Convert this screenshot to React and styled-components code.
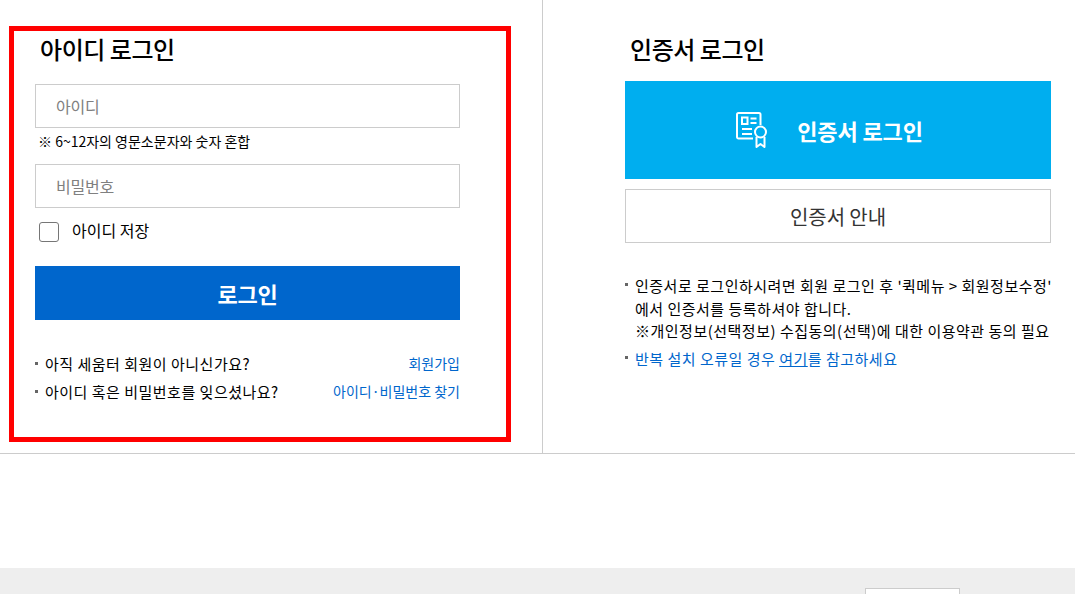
import styled, { createGlobalStyle } from "styled-components"

const Global = createGlobalStyle`
  html, body {
    margin: 0;
    padding: 0;
    background: #fff;
    overflow: hidden;
  }
  body {
    font-family: "Noto Sans CJK KR", "Noto Sans", sans-serif;
    color: #000;
  }
  * {
    box-sizing: border-box;
  }
`

const Page = styled.div`
  width: 1075px;
  height: 594px;
  display: flex;
  flex-direction: column;
  overflow: hidden;
`

const Columns = styled.div`
  display: flex;
  flex: none;
  height: 454px;
  border-bottom: 1px solid #ccc;
`

const LeftColumn = styled.section`
  flex: none;
  width: 543px;
  padding: 26px 0 0 9px;
  border-right: 1px solid #ccc;
`

const RedBox = styled.div`
  width: 502px;
  height: 416px;
  border: 5px solid #f00;
  padding: 0 46px 0 21px;
`

const RightColumn = styled.section`
  flex: 1;
  min-width: 0;
  padding: 31px 24px 0 82px;
`

const Title = styled.h2`
  margin: 0;
  padding-left: ${(p) => p.$indent}px;
  font-size: 24px;
  line-height: 36px;
  font-weight: 500;
  letter-spacing: -0.45px;
`

const Field = styled.input`
  display: block;
  width: 100%;
  height: 44px;
  padding: 0 20px;
  border: 1px solid #ccc;
  border-radius: 0;
  outline: none;
  background: #fff;
  font-family: inherit;
  font-size: 16px;
  letter-spacing: -0.2px;

  &::placeholder {
    color: #808080;
    opacity: 1;
  }
`

const LoginFields = styled.div`
  margin-top: 17px;
`

const Hint = styled.p`
  margin: 0;
  height: 36px;
  padding: 3px 0 0 3px;
  font-size: 14px;
  line-height: 21px;
  letter-spacing: 0;
`

const SaveRow = styled.label`
  display: flex;
  align-items: center;
  gap: 13px;
  margin-top: 11px;
  padding-left: 4px;
  height: 22px;
  font-size: 16px;
  letter-spacing: 0;
`

const CheckBox = styled.span`
  display: block;
  width: 20px;
  height: 20px;
  margin-top: 4px;
  border: 1px solid #767676;
  border-radius: 3px;
  background: #fff;
`

const LoginButton = styled.button`
  display: block;
  width: 100%;
  height: 54px;
  margin-top: 25px;
  border: none;
  background: #0066cc;
  color: #fff;
  font-family: inherit;
  font-size: 22px;
  font-weight: 700;
  letter-spacing: -0.2px;
`

const HelpList = styled.ul`
  list-style: none;
  margin: 29px 0 0;
  padding: 0;
`

const HelpRow = styled.li`
  display: flex;
  justify-content: space-between;
  align-items: center;
  height: 28px;
  font-size: 15px;
  letter-spacing: 0.5px;
`

const Bulleted = styled.span`
  display: flex;
  align-items: center;
  gap: 7px;
  &::before {
    content: "";
    width: 3px;
    height: 3px;
    background: #666;
  }
`

const BlueLink = styled.a`
  color: #0066cc;
  font-size: 14px;
  letter-spacing: 0;
`

const CertButton = styled.button`
  display: flex;
  align-items: center;
  justify-content: center;
  gap: 30px;
  width: 100%;
  height: 98px;
  margin-top: 14px;
  padding: 0 17px 0 0;
  border: none;
  background: #00aeef;
  color: #fff;
  font-family: inherit;
  font-size: 22px;
  font-weight: 700;
  letter-spacing: -0.1px;
`

const GuideButton = styled.button`
  display: block;
  width: 100%;
  height: 54px;
  margin-top: 10px;
  border: 1px solid #ccc;
  background: #fff;
  color: #333;
  font-family: inherit;
  font-size: 20px;
  letter-spacing: -0.1px;
`

const Notes = styled.ul`
  list-style: none;
  margin: 32px 0 0;
  padding: 0;
`

const Note = styled.li`
  position: relative;
  margin-bottom: 5px;
  padding-left: 10px;
  font-size: 15px;
  line-height: 22.5px;
  letter-spacing: 0.5px;
  color: ${(p) => (p.$blue ? "#0066cc" : "#000")};
  white-space: nowrap;

  &::before {
    content: "";
    position: absolute;
    left: 0;
    top: 8px;
    width: 3px;
    height: 3px;
    background: #666;
  }

  a {
    color: inherit;
    text-decoration: underline;
  }
`

const Spacer = styled.div`
  flex: none;
  height: 114px;
`

const Footer = styled.footer`
  flex: 1;
  min-height: 0;
  display: flex;
  justify-content: flex-end;
  align-items: flex-start;
  padding: 20px 115px 0 0;
  background: #eee;
`

const FooterSelect = styled.div`
  flex: none;
  width: 95px;
  height: 40px;
  border: 1px solid #ccc;
  background: #fff;
`

const CertIcon = () => (
  <svg width="31" height="36" viewBox="0 0 31 36" fill="none" stroke="#fff" strokeWidth="2">
    <path d="M24.500 13V2.500A1.500 1.500 0 0 0 23 1H2.500A1.500 1.500 0 0 0 1 2.500V25a1.500 1.500 0 0 0 1.500 1.500H17" />
    <rect x="6" y="5.500" width="5.500" height="6.500" />
    <path d="M14.500 6.500h6M14.500 11h6M6 17h10M6 22h10" />
    <circle cx="24.500" cy="20" r="5.500" />
    <path d="M20.500 25v10l4-3 4 3V25" strokeLinejoin="round" />
  </svg>
)

export default function App() {
  return (
    <Page>
      <Global />
      <Columns>
        <LeftColumn>
          <RedBox>
            <Title $indent={5}>아이디 로그인</Title>
            <LoginFields>
              <Field placeholder="아이디" />
              <Hint>※ 6~12자의 영문소문자와 숫자 혼합</Hint>
              <Field placeholder="비밀번호" type="text" />
            </LoginFields>
            <SaveRow>
              <CheckBox />
              아이디 저장
            </SaveRow>
            <LoginButton>로그인</LoginButton>
            <HelpList>
              <HelpRow>
                <Bulleted>아직 세움터 회원이 아니신가요?</Bulleted>
                <BlueLink>회원가입</BlueLink>
              </HelpRow>
              <HelpRow>
                <Bulleted>아이디 혹은 비밀번호를 잊으셨나요?</Bulleted>
                <BlueLink>아이디·비밀번호 찾기</BlueLink>
              </HelpRow>
            </HelpList>
          </RedBox>
        </LeftColumn>
        <RightColumn>
          <Title $indent={5}>인증서 로그인</Title>
          <CertButton>
            <CertIcon />
            인증서 로그인
          </CertButton>
          <GuideButton>인증서 안내</GuideButton>
          <Notes>
            <Note>
              인증서로 로그인하시려면 회원 로그인 후 '퀵메뉴 &gt; 회원정보수정'
              <br />
              에서 인증서를 등록하셔야 합니다.
              <br />
              ※개인정보(선택정보) 수집동의(선택)에 대한 이용약관 동의 필요
            </Note>
            <Note $blue>
              반복 설치 오류일 경우 <a>여기</a>를 참고하세요
            </Note>
          </Notes>
        </RightColumn>
      </Columns>
      <Spacer />
      <Footer>
        <FooterSelect />
      </Footer>
    </Page>
  )
}
